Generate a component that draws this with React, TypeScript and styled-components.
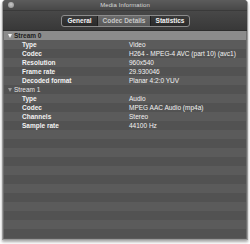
import * as React from 'react'
import styled, { createGlobalStyle } from 'styled-components'

type Field = { label: string; value: string }
type Stream = { name: string; open: boolean; selected: boolean; fields: Field[] }

const streams: Stream[] = [
  {
    name: 'Stream 0',
    open: true,
    selected: true,
    fields: [
      { label: 'Type', value: 'Video' },
      { label: 'Codec', value: 'H264 - MPEG-4 AVC (part 10) (avc1)' },
      { label: 'Resolution', value: '960x540' },
      { label: 'Frame rate', value: '29.930046' },
      { label: 'Decoded format', value: 'Planar 4:2:0 YUV' },
    ],
  },
  {
    name: 'Stream 1',
    open: true,
    selected: false,
    fields: [
      { label: 'Type', value: 'Audio' },
      { label: 'Codec', value: 'MPEG AAC Audio (mp4a)' },
      { label: 'Channels', value: 'Stereo' },
      { label: 'Sample rate', value: '44100 Hz' },
    ],
  },
]

const tabs = [
  { name: 'General', width: 35 },
  { name: 'Codec Details', width: 52 },
  { name: 'Statistics', width: 38 },
]

const GlobalStyle = createGlobalStyle`
  html, body {
    margin: 0;
    padding: 0;
    background: #fff;
  }
  body {
    font-family: "Liberation Sans", Arial, sans-serif;
  }
`

const Page = styled.div`
  width: 250px;
  height: 244px;
  padding: 0 2px;
  box-sizing: border-box;
`

const Window = styled.div`
  display: flex;
  flex-direction: column;
  height: 239px;
  border: 1px solid #9a9a9a;
  border-top: none;
  border-radius: 4px 4px 0 0;
  overflow: hidden;
  box-shadow: 0 2px 3px rgba(0, 0, 0, 0.35);
  background: #525252;
`

const TitleBar = styled.div`
  position: relative;
  display: flex;
  align-items: center;
  justify-content: center;
  height: 10px;
  background: linear-gradient(#5c5c5c, #484848);
  border-bottom: 1px solid #3a3a3a;
`

const Close = styled.span`
  position: absolute;
  left: 5px;
  top: 2px;
  width: 6px;
  height: 6px;
  border-radius: 50%;
  background: radial-gradient(circle at 50% 40%, #c8c8c8, #8a8a8a);
`

const Title = styled.span`
  font-size: 6px;
  color: #d8d8d8;
  letter-spacing: 0.1px;
`

const Toolbar = styled.div`
  display: flex;
  justify-content: center;
  align-items: center;
  height: 19px;
  padding-left: 1px;
  background: linear-gradient(#484848, #383838);
  border-bottom: 1px solid #2c2c2c;
`

const Segments = styled.div`
  display: flex;
  height: 12px;
  border: 1px solid #8c8c8c;
  border-radius: 3px;
  overflow: hidden;
  background: linear-gradient(#3a3a3a, #2a2a2a);
  box-sizing: border-box;
`

const Segment = styled.div<{ $active: boolean; $w: number }>`
  display: flex;
  align-items: center;
  justify-content: center;
  width: ${p => p.$w}px;
  font-size: 6.5px;
  font-weight: bold;
  color: ${p => (p.$active ? '#c8c8c8' : '#f4f4f4')};
  background: ${p => (p.$active ? 'linear-gradient(#6a6a6a, #585858)' : 'transparent')};
  & + & {
    border-left: 1px solid #1e1e1e;
  }
`

const List = styled.div`
  flex: 1;
  display: flex;
  flex-direction: column;
  background: repeating-linear-gradient(
    #525252 0px,
    #525252 9px,
    #5b5b5b 9px,
    #5b5b5b 18px
  );
  border-left: 1px solid #6e6e6e;
  border-right: 1px solid #6e6e6e;
`

const StreamRow = styled.div<{ $selected: boolean }>`
  display: flex;
  align-items: center;
  height: 9px;
  padding-left: 4px;
  font-size: 6.5px;
  background: ${p => (p.$selected ? '#8b8b8b' : 'transparent')};
`

const Arrow = styled.span<{ $selected: boolean }>`
  width: 0;
  height: 0;
  margin-right: 2px;
  border-left: 2.5px solid transparent;
  border-right: 2.5px solid transparent;
  border-top: 4px solid ${p => (p.$selected ? '#f4f4f4' : '#9a9a9a')};
`

const StreamName = styled.span<{ $selected: boolean }>`
  color: ${p => (p.$selected ? '#1c1c1c' : '#e4e4e4')};
  font-weight: ${p => (p.$selected ? 'bold' : 'normal')};
`

const FieldRow = styled.div`
  display: grid;
  grid-template-columns: 107px 1fr;
  align-items: center;
  height: 9px;
  padding-left: 18px;
  font-size: 6.5px;
  color: #f2f2f2;
  white-space: nowrap;
`

const Label = styled.span`
  font-weight: bold;
`

const Value = styled.span`
  font-weight: normal;
`

export default function App() {
  return (
    <Page>
      <GlobalStyle />
      <Window>
        <TitleBar>
          <Close />
          <Title>Media Information</Title>
        </TitleBar>
        <Toolbar>
          <Segments>
            {tabs.map(t => (
              <Segment key={t.name} $active={t.name === 'Codec Details'} $w={t.width}>
                {t.name}
              </Segment>
            ))}
          </Segments>
        </Toolbar>
        <List>
          {streams.map(s => (
            <React.Fragment key={s.name}>
              <StreamRow $selected={s.selected}>
                <Arrow $selected={s.selected} />
                <StreamName $selected={s.selected}>{s.name}</StreamName>
              </StreamRow>
              {s.open &&
                s.fields.map(f => (
                  <FieldRow key={s.name + f.label}>
                    <Label>{f.label}</Label>
                    <Value>{f.value}</Value>
                  </FieldRow>
                ))}
            </React.Fragment>
          ))}
        </List>
      </Window>
    </Page>
  )
}
